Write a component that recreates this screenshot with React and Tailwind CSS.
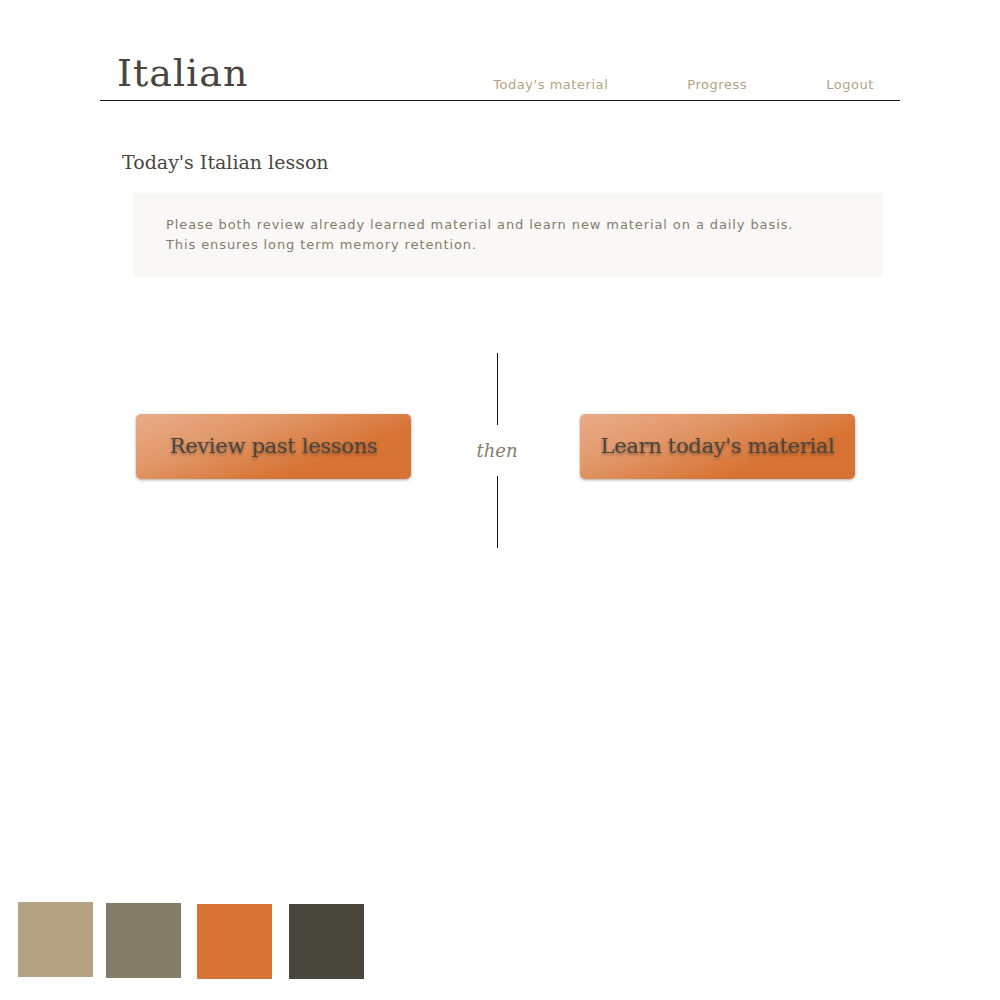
import React from 'react';

const serif = "font-['DejaVu_Serif','Liberation_Serif',serif]";
const sans = "font-['DejaVu_Sans','Liberation_Sans',sans-serif]";

const btn = `${serif} w-[275px] h-[65px] mb-[8px] rounded-[5px] bg-[linear-gradient(160deg,#e9ab87_0%,#e29a6c_30%,#d77334_70%)] shadow-[0_1px_3px_rgba(0,0,0,0.35)] text-[21px] text-[#49463e] [text-shadow:0_2px_3px_rgba(0,0,0,0.35)] tracking-[-0.3px]`;

export default function App() {
  const nav = ["Today's material", 'Progress', 'Logout'];
  const swatches = ['bg-[#b3a383] mt-[2px]', 'bg-[#847d6a] mt-[3px]', 'bg-[#d77334] mt-[4px] ml-[3px]', 'bg-[#49463e] mt-[4px] ml-[4px]'];

  return (
    <div className="w-[1000px] h-[1000px] bg-white relative overflow-hidden">
      <div className="w-[800px] mx-auto pt-[50px]">
        {/* header */}
        <div className="flex items-end justify-between border-b-[1.5px] border-[#1a1a1a] h-[51px] pl-[17px] pr-[26px]">
          <h1 className={`${serif} text-[38px] leading-none text-[#49463e] tracking-[1px] pb-[8px]`}>Italian</h1>
          <nav className={`${sans} flex gap-[79px] text-[13px] text-[#b3a383] pb-[6px] tracking-[0.55px]`}>
            {nav.map((n) => (
              <a key={n}>{n}</a>
            ))}
          </nav>
        </div>

        <h2 className={`${serif} text-[19px] text-[#49463e] mt-[52px] ml-[22px] leading-none`}>Today's Italian lesson</h2>

        <div className={`${sans} bg-[#f9f8f6] ml-[33px] mr-[17px] mt-[21px] h-[85px] pt-[22px] pl-[33px] text-[13px] leading-[20px] tracking-[0.9px] text-[#847d6a]`}>
          <p>Please both review already learned material and learn new material on a daily basis.</p>
          <p>This ensures long term memory retention.</p>
        </div>

        {/* steps */}
        <div className="flex items-center mt-[75px] ml-[36px]">
          <button className={btn}>Review past lessons</button>
          <div className="w-[169px] pl-[3px] flex flex-col items-center">
            <div className="w-px h-[72px] bg-[#111]"></div>
            <div className={`${serif} italic text-[18px] text-[#847d6a] h-[51px] flex items-center`}>then</div>
            <div className="w-px h-[72px] bg-[#111]"></div>
          </div>
          <button className={btn}>Learn today's material</button>
        </div>
      </div>

      {/* palette */}
      <div className="absolute left-[18px] top-[900px] flex gap-[13px]">
        {swatches.map((s, i) => (
          <div key={i} className={`w-[75px] h-[75px] ${s}`}></div>
        ))}
      </div>
    </div>
  );
}
